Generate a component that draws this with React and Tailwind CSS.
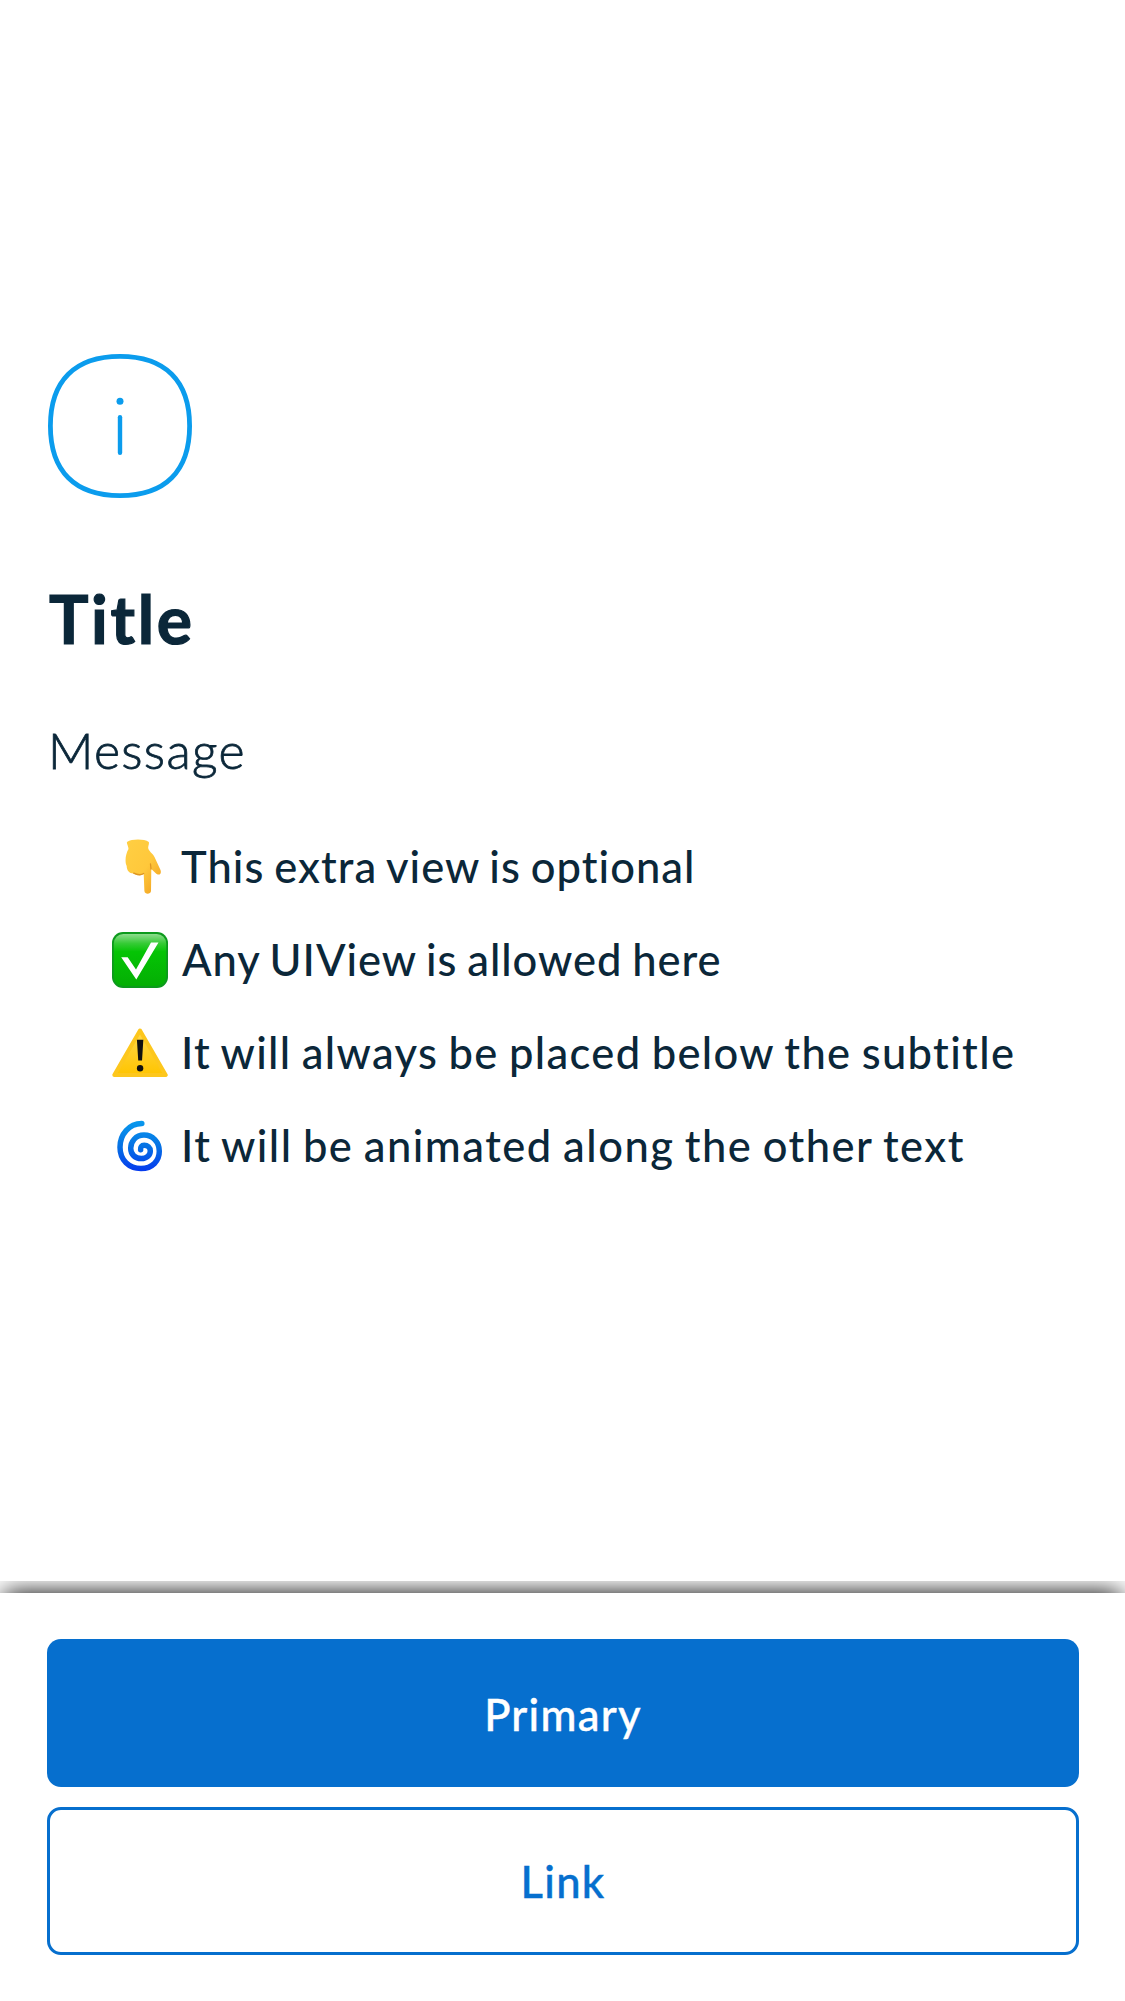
function InfoIcon() {
  return (
    <svg className="block size-[144px]" viewBox="0 0 144 144" fill="none" stroke="#0b9ced" strokeWidth="4.8" strokeLinecap="round">
      <path d="M72 2.4C117.200 2.400 141.600 26.800 141.600 72S117.200 141.600 72 141.600 2.400 117.200 2.400 72 26.800 2.400 72 2.400Z" />
      <path d="M72 63.200V98.800" strokeWidth="4.4" />
      <circle cx="72" cy="47.3" r="3.5" fill="#0b9ced" stroke="none" />
    </svg>
  );
}

function PointDown() {
  return (
    <svg className="size-[56px]" viewBox="0 0 56 56">
      <defs>
        <linearGradient id="hand" x1="0" y1="0" x2="1" y2="1">
          <stop offset="0" stopColor="#ffcf43" />
          <stop offset=".55" stopColor="#ffc83b" />
          <stop offset="1" stopColor="#ef9c1e" />
        </linearGradient>
      </defs>
      <path d="M15 3C20-.2 32-.2 36.800 3C37.400 5 36 7 36.200 9C36.400 12 40.500 14 42.500 18L48.500 31C50 35.500 46.500 37 43.500 34L39.300 30L39 52C38.700 55.500 32.700 55.500 32.400 52L31.700 35C28.500 37 24 36.500 21.700 34.500C17 34.500 14.700 31 14.700 27C12.600 23 13.500 15 16.500 10C16.500 7 14.500 5 15 3Z" fill="url(#hand)" />
      <path d="M21.700 34.200C25 35.800 29 36.300 31.700 34.500M39 30L38.500 25" fill="none" stroke="#dd9524" strokeWidth="1.300" strokeLinecap="round" />
    </svg>
  );
}

function CheckBox() {
  return (
    <svg className="size-[56px]" viewBox="0 0 56 56">
      <defs>
        <linearGradient id="green" x1="0" y1="0" x2="0" y2="1">
          <stop offset="0" stopColor="#8ddc8d" />
          <stop offset=".18" stopColor="#36cb36" />
          <stop offset=".34" stopColor="#05c405" />
          <stop offset="1" stopColor="#04ae04" />
        </linearGradient>
      </defs>
      <rect width="56" height="56" rx="11" fill="#0c9a1c" />
      <rect x="1.800" y="2" width="52.400" height="52" rx="9.500" fill="url(#green)" />
      <path d="M9.200 25.300H15.700L24 37.500L39 10.500H46.500L24.300 47.500Z" fill="#fff" />
    </svg>
  );
}

function Warning() {
  return (
    <svg className="size-[56px]" viewBox="0 0 56 56">
      <defs>
        <linearGradient id="amber" x1="0" y1="0" x2="0" y2="1">
          <stop offset="0" stopColor="#ffd94d" />
          <stop offset="1" stopColor="#ffc400" />
        </linearGradient>
      </defs>
      <path d="M28 5.500L53.700 50H2.300Z" fill="url(#amber)" stroke="#fdc71d" strokeWidth="4" strokeLinejoin="round" />
      <path d="M24.900 14.700H31.300L30 35.500H26.200Z" fill="#101010" />
      <circle cx="28.100" cy="43.300" r="3.200" fill="#101010" />
    </svg>
  );
}

function Cyclone() {
  return (
    <svg className="size-[56px]" viewBox="0 0 56 56">
      <defs>
        <linearGradient id="swirl" gradientUnits="userSpaceOnUse" x1="0" y1="2" x2="0" y2="53">
          <stop offset="0" stopColor="#0899ed" />
          <stop offset=".5" stopColor="#0672e4" />
          <stop offset="1" stopColor="#0538ee" />
        </linearGradient>
      </defs>
      <path transform="translate(0 .8)" d="M29.800 4.800C17 5 8 15.500 8 28.500C8 41.500 17 49.700 29 49.700C40.500 49.700 47.300 42 47.300 32.500C47.300 23 40.500 16.300 32 16.300C23.500 16.300 18.700 23 18.700 29.500C18.700 36 23.500 39.800 29.300 39.800C35 39.800 38.300 36 38.300 32.200C38.300 28.500 35.500 26.500 32.200 26.500C29.500 26.500 28.200 28.500 28.600 31" fill="none" stroke="url(#swirl)" strokeWidth="5.500" strokeLinecap="round" />
    </svg>
  );
}

const rows = [
  { Icon: PointDown, text: "This extra view is optional", style: "tracking-[1.04px] [word-spacing:-2.2px]" },
  { Icon: CheckBox, text: "Any UIView is allowed here", style: "pl-px tracking-[0.97px] [word-spacing:-2.2px]" },
  { Icon: Warning, text: "It will always be placed below the subtitle", style: "tracking-[1.34px] [word-spacing:-2.1px]" },
  { Icon: Cyclone, text: "It will be animated along the other text", style: "tracking-[1.48px] [word-spacing:-2.1px]" },
];

export default function App() {
  return (
    <div className="flex h-[2001px] w-[1125px] flex-col overflow-hidden bg-white font-['Lato',sans-serif] text-[#0b2739]">
      <main className="flex-1 px-12 pt-[354px]">
        <InfoIcon />
        <h1 className="mt-[81px] pl-px text-[66px] leading-[80px] font-bold tracking-[2.7px] [-webkit-text-stroke:1.2px_#0b2739]">Title</h1>
        <p className="mt-[61px] text-[50px] leading-[60px] font-light tracking-[1.3px] [-webkit-text-stroke:0.8px_#0b2739]">Message</p>
        <ul className="mt-[40px] pl-16">
          {rows.map(({ Icon, text, style }) => (
            <li key={text} className="flex h-[93px] items-center gap-[13px] text-[43.500px] leading-[52px] font-medium whitespace-nowrap">
              <Icon />
              <span className={`-mt-0.5 ${style}`}>{text}</span>
            </li>
          ))}
        </ul>
      </main>
      <footer className="flex h-[408px] flex-col gap-5 bg-white px-[46.500px] pt-[46px] shadow-[0_-4px_24px_-4px_#000] [clip-path:inset(-12px_0_0_0)]">
        <button className="h-[148px] shrink-0 rounded-[14px] bg-[#066fce] pt-[3px] pl-px text-[43.500px] font-medium tracking-[1.3px] text-white [-webkit-text-stroke:0.4px_#fff]">Primary</button>
        <button className="h-[148px] shrink-0 rounded-[14px] border-3 border-[#066fce] pt-[2px] pl-px text-[43.500px] font-medium tracking-[1.3px] text-[#066fce] [-webkit-text-stroke:0.4px_#066fce]">Link</button>
      </footer>
    </div>
  );
}
